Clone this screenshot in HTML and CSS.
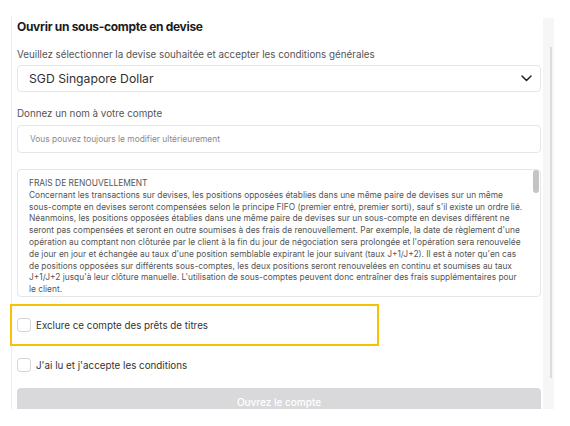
FILE: index.html
```html
<!DOCTYPE html>
<html lang="fr">
<head>
<meta charset="utf-8">
<link rel="stylesheet" href="styles.css">
</head>
<body>
<div class="frame">
  <div class="panel">
    <div class="content">
      <h1 class="title">Ouvrir un sous-compte en devise</h1>
      <p class="label label-first">Veuillez sélectionner la devise souhaitée et accepter les conditions générales</p>
      <div class="select">
        <span>SGD Singapore Dollar</span>
        <svg class="chev" width="11" height="7" viewBox="0 0 11 7"><path d="M1 1l4.5 4.5L10 1" fill="none" stroke="#222" stroke-width="1.5" stroke-linecap="round" stroke-linejoin="round"/></svg>
      </div>
      <p class="label label-second">Donnez un nom à votre compte</p>
      <div class="input">Vous pouvez toujours le modifier ultérieurement</div>
      <div class="terms">
        <div class="terms-text">FRAIS DE RENOUVELLEMENT<br>Concernant les transactions sur devises, les positions opposées établies dans une même paire de devises sur un même<br>sous-compte en devises seront compensées selon le principe FIFO (premier entré, premier sorti), sauf s'il existe un ordre lié.<br>Néanmoins, les positions opposées établies dans une même paire de devises sur un sous-compte en devises différent ne<br>seront pas compensées et seront en outre soumises à des frais de renouvellement. Par exemple, la date de règlement d'une<br>opération au comptant non clôturée par le client à la fin du jour de négociation sera prolongée et l'opération sera renouvelée<br>de jour en jour et échangée au taux d'une position semblable expirant le jour suivant (taux J+1/J+2). Il est à noter qu'en cas<br>de positions opposées sur différents sous-comptes, les deux positions seront renouvelées en continu et soumises au taux<br>J+1/J+2 jusqu'à leur clôture manuelle. L'utilisation de sous-comptes peuvent donc entraîner des frais supplémentaires pour<br>le client.</div>
        <div class="terms-scroll"><div class="terms-thumb"></div></div>
      </div>
      <label class="check check-first"><span class="box"></span><span>Exclure ce compte des prêts de titres</span></label>
      <label class="check check-second"><span class="box"></span><span>J'ai lu et j'accepte les conditions</span></label>
      <div class="button">Ouvrez le compte</div>
    </div>
    <div class="scrollbar"><div class="thumb"></div></div>
  </div>
  <div class="highlight"></div>
</div>
</body>
</html>
```
FILE: styles.css
```css
* { box-sizing: border-box; }
html, body { margin: 0; padding: 0; background: #fff; }
body {
  font-family: Inter, "Noto Sans", sans-serif;
  color: #333;
  width: 570px;
  height: 426px;
  overflow: hidden;
}
.frame {
  position: relative;
  padding: 16px 0 0 11px;
}
.panel {
  display: flex;
  width: 543px;
  height: 393px;
  overflow: hidden;
  border-left: 1px solid #ececec;
}
.content {
  flex: 1;
  padding: 3px 2px 0 5px;
  display: flex;
  flex-direction: column;
}
.content > * { flex-shrink: 0; }
.title {
  margin: 0;
  font-size: 12px;
  letter-spacing: -0.3px;
  line-height: 16px;
  font-weight: 700;
  color: #1b1b1b;
}
.label {
  margin: 0;
  font-size: 9.8px;
  line-height: 14px;
  color: #555;
}
.label-first { margin-top: 13px; }
.label-second { margin-top: 15px; }
.select {
  margin-top: 3px;
  height: 27px;
  border: 1px solid #e6e6e6;
  border-radius: 4px;
  display: flex;
  align-items: center;
  justify-content: space-between;
  padding: 0 8px 0 11px;
  font-size: 12.2px;
  color: #2f2f2f;
}
.input {
  margin-top: 4px;
  height: 28px;
  border: 1px solid #e6e6e6;
  border-radius: 4px;
  display: flex;
  align-items: center;
  padding: 0 12px;
  font-size: 8.4px;
  color: #8a8a8a;
}
.terms {
  margin-top: 16px;
  height: 128px;
  border: 1px solid #e6e6e6;
  border-radius: 4px;
  display: flex;
  overflow: hidden;
}
.terms-text {
  flex: 1;
  padding: 8px 4px 0 11px;
  font-size: 8.4px;
  line-height: 11.8px;
  color: #555;
  white-space: nowrap;
  overflow: hidden;
}
.terms-scroll {
  width: 8px;
  padding: 0 1px 0 1px;
}
.terms-thumb {
  height: 23px;
  background: #c4c4c4;
  border-radius: 3px;
}
.check {
  display: flex;
  align-items: center;
  gap: 5px;
  font-size: 9.8px;
  color: #333;
  height: 14px;
}
.check-first { margin-top: 21px; }
.check-second { margin-top: 26px; }
.box {
  width: 14px;
  height: 14px;
  border: 1px solid #d6d6d6;
  border-radius: 3px;
  background: #fff;
}
.button {
  margin-top: 16px;
  height: 28px;
  background: #d9d9db;
  border-radius: 4px;
  color: #fff;
  font-size: 10px;
  font-weight: 500;
  display: flex;
  align-items: center;
  justify-content: center;
}
.scrollbar {
  width: 11px;
  margin-top: 2px;
  background: #f6f6f6;
  padding: 29px 2px 0 7px;
}
.thumb {
  width: 2px;
  height: 331px;
  background: #dcdcdc;
}
.highlight {
  position: absolute;
  left: 10px;
  top: 304px;
  width: 369px;
  height: 42px;
  border: 2px solid #f7c202;
}
```
